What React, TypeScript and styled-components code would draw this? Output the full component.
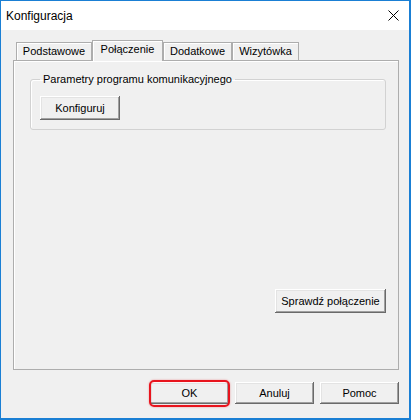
import React from 'react';
import styled, { createGlobalStyle } from 'styled-components';

const Global = createGlobalStyle`
  html, body { margin: 0; padding: 0; background: #fff; }
  body { font-family: "Liberation Sans", Arial, sans-serif; font-size: 11px; color: #000; }
  * { box-sizing: border-box; }
`;

const Window = styled.div`
  width: 411px;
  height: 420px;
  border: 1px solid #1a7fd4;
  border-right-width: 2px;
  border-bottom-width: 2px;
  display: flex;
  flex-direction: column;
  background: #f0f0f0;
`;

const TitleBar = styled.div`
  height: 29px;
  flex: none;
  background: #fff;
  display: flex;
  align-items: center;
  justify-content: space-between;
  padding: 0 10px 0 5px;
  font-size: 12px;
`;

const Title = styled.span`
  line-height: 14px;
  padding-top: 1px;
`;

const Body = styled.div`
  flex: 1;
  display: flex;
  flex-direction: column;
  padding: 10px 10px 0 12px;
`;

const TabStrip = styled.div`
  display: flex;
  align-items: flex-end;
  height: 20px;
  padding-left: 3px;
`;

const Tab = styled.div<{ $active?: boolean; $w: number }>`
  position: relative;
  z-index: ${(p) => (p.$active ? 1 : 0)};
  display: flex;
  align-items: center;
  justify-content: center;
  width: ${(p) => p.$w}px;
  height: ${(p) => (p.$active ? 21 : 18)}px;
  margin-bottom: ${(p) => (p.$active ? -1 : 0)}px;
  padding: 0 0 ${(p) => (p.$active ? 3 : 0)}px;
  border: 1px solid #adadad;
  border-bottom: none;
  background: #f0f0f0;
  box-shadow: inset 1px 1px #fff;
  line-height: 13px;
  white-space: nowrap;
`;

const Panel = styled.div`
  height: 310px;
  display: flex;
  flex-direction: column;
  align-items: stretch;
  padding: 12px 12px 56px 16px;
  border: 1px solid #adadad;
  box-shadow: inset 1px 1px #fff;
`;

const GroupBox = styled.fieldset`
  margin: 0;
  min-width: 0;
  padding: 10px 9px 9px 9px;
  border: 1px solid #d2d2d2;
  border-radius: 3px;
  box-shadow: inset 1px 1px #fff;
`;

const GroupLegend = styled.legend`
  padding: 0 3px;
  line-height: 13px;
`;

const Button = styled.button<{ $w: number; $h: number }>`
  position: relative;
  width: ${(p) => p.$w}px;
  height: ${(p) => p.$h}px;
  flex: none;
  padding: 0;
  border: none;
  background: #f0f0f0;
  font-family: "Liberation Sans", Arial, sans-serif;
  font-size: 11px;
  color: #000;
  box-shadow: inset -1px -1px #6a6a6a, inset 1px 1px #fff, inset -2px -2px #a0a0a0, inset 2px 2px #e3e3e3;
`;

const CheckButton = styled(Button)`
  margin-top: auto;
  align-self: flex-end;
`;

const OkButton = styled(Button)`
  &::after {
    content: '';
    position: absolute;
    left: -1px;
    right: -1px;
    top: -2px;
    bottom: -3px;
    border: 2px solid #e8141d;
    border-radius: 5px;
    box-shadow: 0 0 2px rgba(232, 20, 29, 0.45), inset 0 0 1px rgba(232, 20, 29, 0.4);
  }
`;

const ButtonRow = styled.div`
  display: flex;
  justify-content: flex-end;
  gap: 6px;
  margin-top: 12px;
`;

const CloseIcon = () => (
  <svg width="11" height="11" viewBox="0 0 11 11">
    <path d="M0.5 0.5 L10.5 10.5 M10.5 0.5 L0.5 10.5" stroke="#000" strokeWidth="1" fill="none" />
  </svg>
);

export default function App() {
  return (
    <>
      <Global />
      <Window>
        <TitleBar>
          <Title>Konfiguracja</Title>
          <CloseIcon />
        </TitleBar>
        <Body>
          <TabStrip>
            <Tab $w={76}>Podstawowe</Tab>
            <Tab $w={71} $active>Połączenie</Tab>
            <Tab $w={69}>Dodatkowe</Tab>
            <Tab $w={67}>Wizytówka</Tab>
          </TabStrip>
          <Panel>
            <GroupBox>
              <GroupLegend>Parametry programu komunikacyjnego</GroupLegend>
              <Button $w={80} $h={24}>Konfiguruj</Button>
            </GroupBox>
            <CheckButton $w={111} $h={24}>Sprawdź połączenie</CheckButton>
          </Panel>
          <ButtonRow>
            <OkButton $w={79} $h={22}>OK</OkButton>
            <Button $w={79} $h={22}>Anuluj</Button>
            <Button $w={79} $h={22}>Pomoc</Button>
          </ButtonRow>
        </Body>
      </Window>
    </>
  );
}
